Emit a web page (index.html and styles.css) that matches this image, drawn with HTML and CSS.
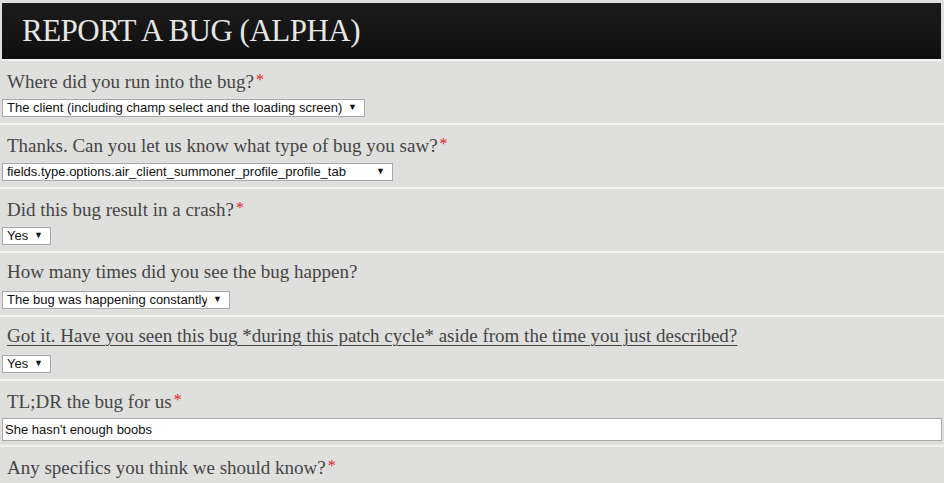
FILE: index.html
```html
<!DOCTYPE html>
<html lang="en">
<head>
    <meta charset="UTF-8">
    <meta name="viewport" content="width=device-width, initial-scale=1.0">
    <title>Report a Bug (Alpha)</title>
    <link rel="stylesheet" href="styles.css">
</head>
<body>
    <div class="page">
        <div class="header">
            <h1>REPORT A BUG (ALPHA)</h1>
        </div>

        <form class="bug-form">
            <div class="field">
                <label for="where">Where did you run into the bug?<span class="req">*</span></label>
                <span class="select-wrap">
                    <select id="where" class="select-where">
                        <option>The client (including champ select and the loading screen)</option>
                    </select>
                </span>
            </div>

            <div class="field">
                <label for="type">Thanks. Can you let us know what type of bug you saw?<span class="req">*</span></label>
                <span class="select-wrap">
                    <select id="type" class="select-type">
                        <option>fields.type.options.air_client_summoner_profile_profile_tab</option>
                    </select>
                </span>
            </div>

            <div class="field">
                <label for="crash">Did this bug result in a crash?<span class="req">*</span></label>
                <span class="select-wrap">
                    <select id="crash" class="select-yes">
                        <option>Yes</option>
                        <option>No</option>
                    </select>
                </span>
            </div>

            <div class="field">
                <label for="times">How many times did you see the bug happen?</label>
                <span class="select-wrap">
                    <select id="times" class="select-times">
                        <option>The bug was happening constantly</option>
                    </select>
                </span>
            </div>

            <div class="field">
                <label for="seen" class="underlined">Got it. Have you seen this bug *during this patch cycle* aside from the time you just described?</label>
                <span class="select-wrap">
                    <select id="seen" class="select-yes">
                        <option>Yes</option>
                        <option>No</option>
                    </select>
                </span>
            </div>

            <div class="field field-text">
                <label for="tldr">TL;DR the bug for us<span class="req">*</span></label>
                <input type="text" id="tldr" value="She hasn't enough boobs">
            </div>

            <div class="field field-last">
                <label for="specifics">Any specifics you think we should know?<span class="req">*</span></label>
            </div>
        </form>
    </div>
</body>
</html>
```

FILE: styles.css
```css
body {
    margin: 0;
    background-color: #dfdfdd;
    font-family: 'Liberation Serif', serif;
    overflow: hidden;
}

.page {
    padding-top: 3px;
}

.header {
    margin: 0 3px 0 2px;
    height: 56px;
    background: linear-gradient(180deg, #1b1b1b 0%, #141414 60%, #0f0f0f 100%);
    border-bottom: 2px solid #f4f4f2;
    display: flex;
    align-items: center;
}

.header h1 {
    margin: 0;
    padding-left: 20px;
    font-weight: normal;
    font-size: 31px;
    color: #e6e6e4;
    letter-spacing: -0.5px;
}

.bug-form {
    margin: 0;
}

.field {
    padding: 7px 2px 6px;
    border-bottom: 2px solid #f2f2f0;
}

.field label {
    display: block;
    height: 24px;
    line-height: 24px;
    margin-bottom: 7px;
    padding-left: 5px;
    font-size: 19px;
    color: #454545;
}

.field label.underlined {
    text-decoration: underline;
    text-underline-offset: 3px;
    text-decoration-thickness: 1px;
}

.req {
    color: #e0242a;
    font-size: 16px;
    vertical-align: 3px;
    margin-left: 2px;
}

.select-wrap {
    position: relative;
    display: block;
    width: fit-content;
}

.select-wrap::after {
    content: "\25BC";
    position: absolute;
    right: 8px;
    top: 3px;
    font-family: 'Liberation Sans', sans-serif;
    font-size: 9px;
    color: #111;
    pointer-events: none;
}

select {
    appearance: none;
    -webkit-appearance: none;
    display: block;
    height: 18px;
    margin: 0;
    padding: 0 22px 0 4px;
    border: 1px solid #a9a9a9;
    border-radius: 0;
    background-color: #fff;
    font-family: 'Liberation Sans', Arial, sans-serif;
    font-size: 13px;
    line-height: 16px;
    color: #111;
}

.select-where { width: 363px; }
.select-type { width: 391px; }
.select-yes { width: 49px; }
.select-times { width: 228px; }

.field-text label {
    margin-bottom: 6px;
}

.field-text {
    padding-bottom: 4px;
}

input[type="text"] {
    display: block;
    box-sizing: border-box;
    width: 940px;
    height: 23px;
    margin: 0;
    padding: 0 2px;
    border: 1px solid #a9a9a9;
    background-color: #fff;
    font-family: 'Liberation Sans', Arial, sans-serif;
    font-size: 13px;
    color: #111;
}

.field-last {
    border-bottom: none;
}
```
